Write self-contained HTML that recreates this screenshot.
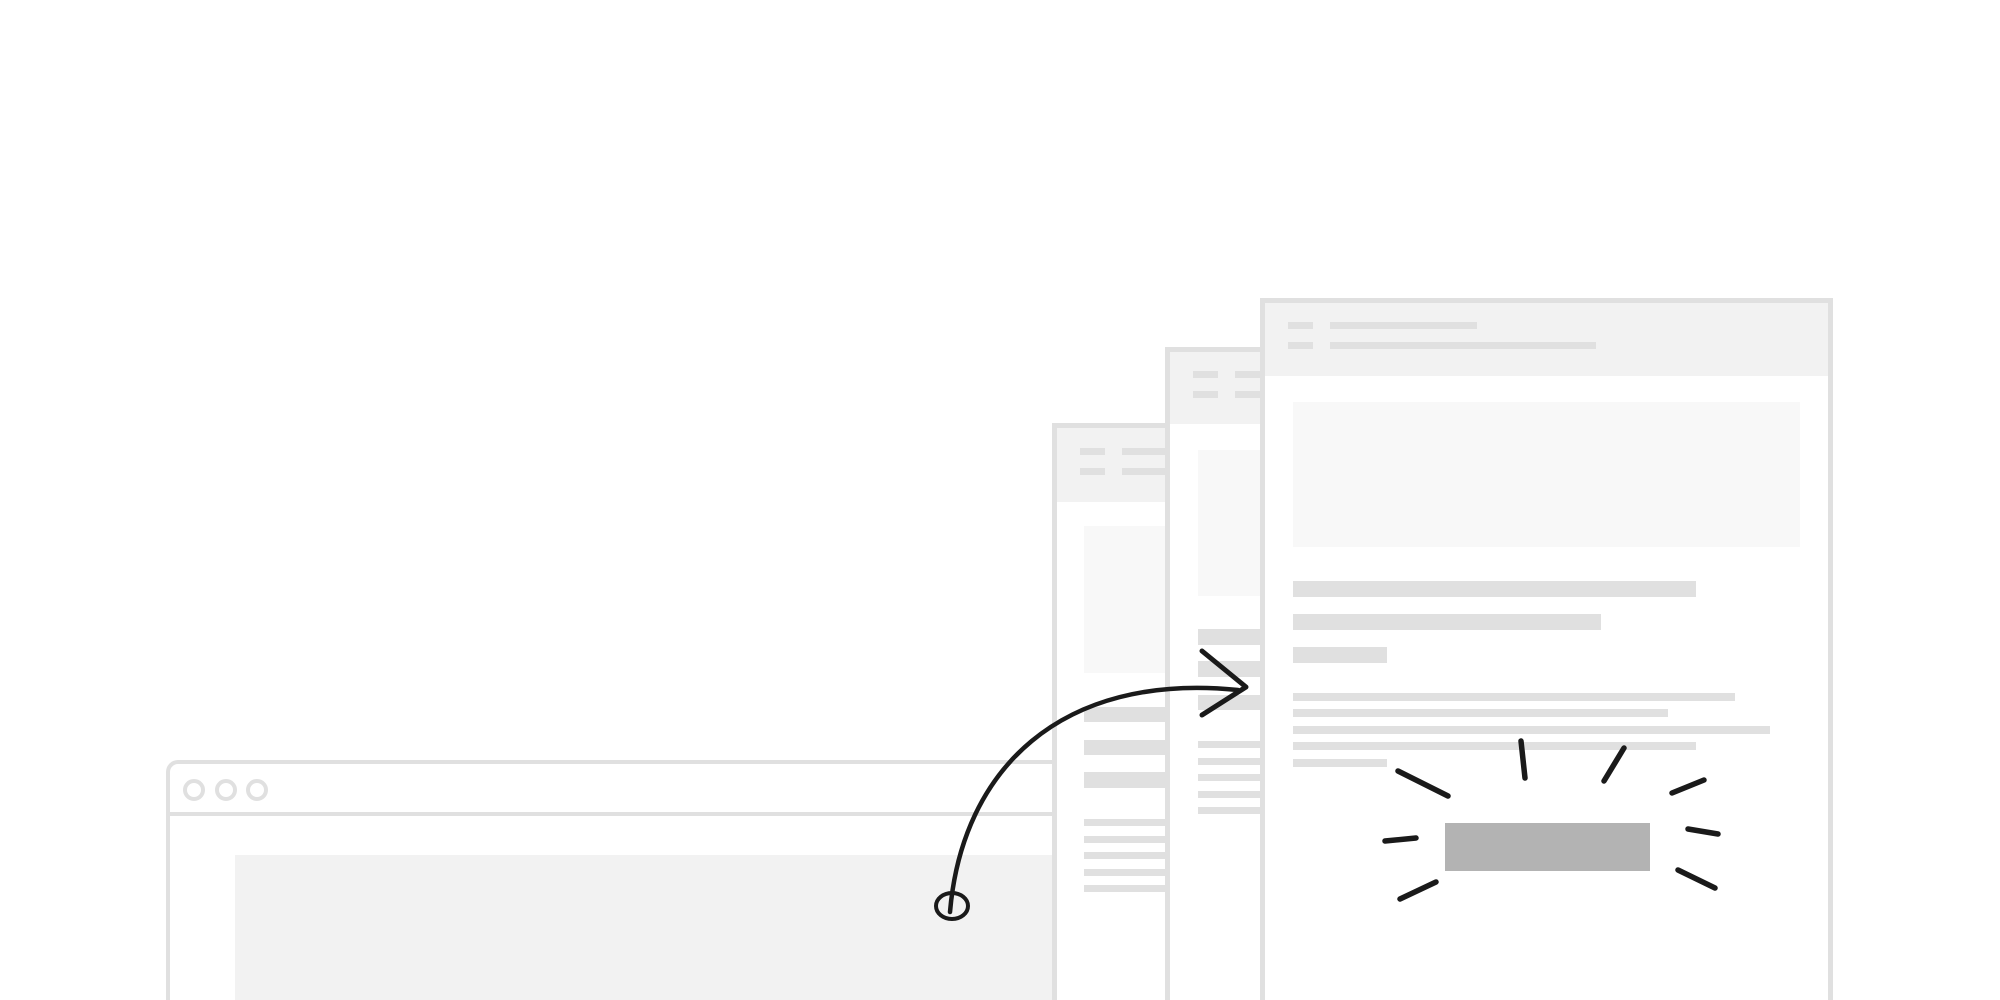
<!DOCTYPE html>
<html><head><style>
html,body{margin:0;padding:0;background:#fff;width:2000px;height:1000px;overflow:hidden;}
#w{position:relative;width:2000px;height:1000px;overflow:hidden;}
#w div{position:absolute;box-sizing:border-box;}
.pg{background:#fff;border:5px solid #e0e0e0;border-bottom:none;}
.hd{background:#f2f2f2;}
.g{background:#e0e0e0;}
.h{background:#f8f8f8;}
</style></head><body><div id="w">

<!-- browser -->
<div style="left:166px;top:760px;width:900px;height:240px;border:4px solid #e0e0e0;border-bottom:none;border-right:none;border-radius:12px 0 0 0;background:#fff;"></div>
<div class="g" style="left:166px;top:812px;width:900px;height:4px;"></div>
<div style="left:183px;top:779px;width:22px;height:22px;border:4px solid #e0e0e0;border-radius:50%;"></div>
<div style="left:215px;top:779px;width:22px;height:22px;border:4px solid #e0e0e0;border-radius:50%;"></div>
<div style="left:246px;top:779px;width:22px;height:22px;border:4px solid #e0e0e0;border-radius:50%;"></div>
<div style="left:235px;top:855px;width:830px;height:145px;background:#f2f2f2;"></div>

<!-- back page -->
<div class="pg" style="left:1052px;top:423px;width:400px;height:577px;"></div>
<div class="hd" style="left:1057px;top:428px;width:120px;height:74px;"></div>
<div class="g" style="left:1080px;top:448px;width:25px;height:7px;"></div>
<div class="g" style="left:1122px;top:448px;width:60px;height:7px;"></div>
<div class="g" style="left:1080px;top:468px;width:25px;height:7px;"></div>
<div class="g" style="left:1122px;top:468px;width:60px;height:7px;"></div>
<div class="h" style="left:1084px;top:526px;width:90px;height:147px;"></div>
<div class="g" style="left:1084px;top:707px;width:90px;height:15px;"></div>
<div class="g" style="left:1084px;top:740px;width:90px;height:15px;"></div>
<div class="g" style="left:1084px;top:772px;width:90px;height:16px;"></div>
<div class="g" style="left:1084px;top:819px;width:90px;height:7px;"></div>
<div class="g" style="left:1084px;top:836px;width:90px;height:7px;"></div>
<div class="g" style="left:1084px;top:852px;width:90px;height:7px;"></div>
<div class="g" style="left:1084px;top:869px;width:90px;height:7px;"></div>
<div class="g" style="left:1084px;top:885px;width:90px;height:7px;"></div>

<!-- middle page -->
<div class="pg" style="left:1165px;top:347px;width:400px;height:653px;"></div>
<div class="hd" style="left:1170px;top:352px;width:100px;height:72px;"></div>
<div class="g" style="left:1193px;top:371px;width:25px;height:7px;"></div>
<div class="g" style="left:1235px;top:371px;width:40px;height:7px;"></div>
<div class="g" style="left:1193px;top:391px;width:25px;height:7px;"></div>
<div class="g" style="left:1235px;top:391px;width:40px;height:7px;"></div>
<div class="h" style="left:1198px;top:450px;width:70px;height:146px;"></div>
<div class="g" style="left:1198px;top:629px;width:70px;height:16px;"></div>
<div class="g" style="left:1198px;top:661px;width:70px;height:16px;"></div>
<div class="g" style="left:1198px;top:695px;width:70px;height:15px;"></div>
<div class="g" style="left:1198px;top:741px;width:70px;height:7px;"></div>
<div class="g" style="left:1198px;top:758px;width:70px;height:7px;"></div>
<div class="g" style="left:1198px;top:774px;width:70px;height:7px;"></div>
<div class="g" style="left:1198px;top:791px;width:70px;height:7px;"></div>
<div class="g" style="left:1198px;top:807px;width:70px;height:7px;"></div>

<!-- front page -->
<div class="pg" style="left:1260px;top:298px;width:573px;height:702px;"></div>
<div class="hd" style="left:1265px;top:303px;width:563px;height:73px;"></div>
<div class="g" style="left:1288px;top:322px;width:25px;height:7px;"></div>
<div class="g" style="left:1330px;top:322px;width:147px;height:7px;"></div>
<div class="g" style="left:1288px;top:342px;width:25px;height:7px;"></div>
<div class="g" style="left:1330px;top:342px;width:266px;height:7px;"></div>
<div class="h" style="left:1293px;top:402px;width:507px;height:145px;"></div>
<div class="g" style="left:1293px;top:581px;width:403px;height:16px;"></div>
<div class="g" style="left:1293px;top:614px;width:308px;height:16px;"></div>
<div class="g" style="left:1293px;top:647px;width:94px;height:16px;"></div>
<div class="g" style="left:1293px;top:693px;width:442px;height:8px;"></div>
<div class="g" style="left:1293px;top:709px;width:375px;height:8px;"></div>
<div class="g" style="left:1293px;top:726px;width:477px;height:8px;"></div>
<div class="g" style="left:1293px;top:742px;width:403px;height:8px;"></div>
<div class="g" style="left:1293px;top:759px;width:94px;height:8px;"></div>
<div style="left:1445px;top:823px;width:205px;height:48px;background:#b3b3b3;"></div>

<svg width="2000" height="1000" style="position:absolute;left:0;top:0" fill="none" stroke="#1a1a1a" stroke-linecap="round">
<path d="M950 912 C962 770 1060 672 1238 690" stroke-width="4.5"/>
<path d="M1202 651 L1246 687 L1202 715" stroke-width="5" stroke-linejoin="round"/>
<ellipse cx="952" cy="906" rx="16" ry="13" stroke-width="4"/>
<g stroke-width="5.5">
<path d="M1398 771 L1448 796"/>
<path d="M1521 741 L1525 778"/>
<path d="M1624 748 L1604 781"/>
<path d="M1704 780 L1672 793"/>
<path d="M1385 841 L1416 838"/>
<path d="M1688 829 L1718 834"/>
<path d="M1436 882 L1400 899"/>
<path d="M1678 870 L1715 888"/>
</g>
</svg>
</div></body></html>
